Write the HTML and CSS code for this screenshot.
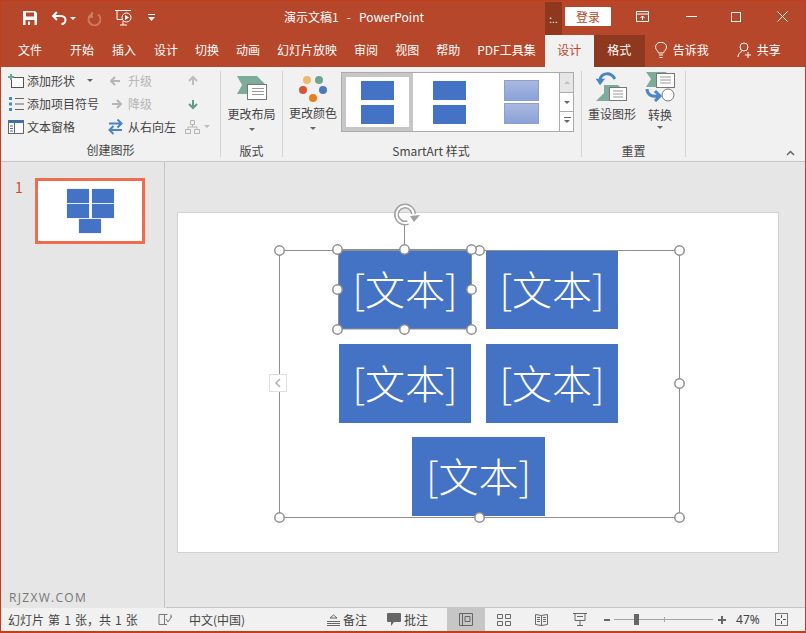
FILE: index.html
```html
<!DOCTYPE html>
<html lang="zh-CN">
<head>
  <meta charset="UTF-8" />
  <title>演示文稿1 - PowerPoint</title>
  <link rel="stylesheet" href="styles.css">
</head>
<body>
<div class="window">

  <!-- title bar -->
  <div class="titlebar">
    <svg class="qat-save" width="16" height="16" viewBox="0 0 16 16"><path d="M1 1h12l2 2v12H1z" fill="#fff"/><rect x="4" y="2.500" width="8" height="4" fill="#b7472a"/><rect x="3.500" y="10" width="9" height="5" fill="#b7472a"/><rect x="6" y="11.500" width="2" height="3.500" fill="#fff"/></svg>
    <svg class="qat-undo" width="16" height="15" viewBox="0 0 16 15"><path d="M6 1L2 5l4 4M2 5h8c3 0 4.500 2 4.500 4s-1.500 4-4 4" fill="none" stroke="#fff" stroke-width="2"/></svg>
    <span class="caret caret-undo"></span>
    <svg class="qat-redo" width="14" height="15" viewBox="0 0 14 15"><path d="M10 2.500a6 6 0 1 1-6-.5M4 0v5h-4" transform="translate(1 1)" fill="none" stroke="#cc7a5f" stroke-width="2"/></svg>
    <svg class="qat-show" width="17" height="16" viewBox="0 0 17 16"><path d="M0 .5h16M2 .5v9h6M5 15h7M8 11v4" fill="none" stroke="#fff"/><circle cx="11.500" cy="7.500" r="4.500" fill="#b7472a" stroke="#fff"/><path d="M10 5l4 2.500-4 2.500z" fill="#fff"/></svg>
    <svg class="qat-more" width="9" height="8" viewBox="0 0 9 8"><path d="M1 .5h7" stroke="#fff"/><path d="M1 3h7L4.500 7z" fill="#fff"/></svg>
    <div class="doc-title">演示文稿1&nbsp;&nbsp; -&nbsp;&nbsp; PowerPoint</div>
    <div class="ctx-flag">:..</div>
    <button class="signin">登录</button>
    <svg class="win-ribbon" width="14" height="11" viewBox="0 0 14 11"><path d="M.5.500h12v10H.500zM.5 3h12M6.500 9V5M4.500 7l2-2 2 2" fill="none" stroke="#fff"/></svg>
    <svg class="win-min" width="11" height="1" viewBox="0 0 11 1"><rect width="11" height="1" fill="#fff"/></svg>
    <svg class="win-max" width="10" height="10" viewBox="0 0 10 10"><rect x=".5" y=".5" width="9" height="9" fill="none" stroke="#fff"/></svg>
    <svg class="win-close" width="11" height="11" viewBox="0 0 11 11"><path d="M.5.500l10 10M10.500.500l-10 10" stroke="#fff"/></svg>
  </div>

  <!-- tabs -->
  <div class="tabs">
    <span class="tab tab-file">文件</span>
    <span class="tab tab-home">开始</span>
    <span class="tab tab-wide">插入</span>
    <span class="tab">设计</span>
    <span class="tab">切换</span>
    <span class="tab">动画</span>
    <span class="tab">幻灯片放映</span>
    <span class="tab">审阅</span>
    <span class="tab">视图</span>
    <span class="tab">帮助</span>
    <span class="tab">PDF工具集</span>
    <span class="tab tab-active">设计</span>
    <span class="tab tab-ctx">格式</span>
    <svg class="tell-icon" width="12" height="17" viewBox="0 0 12 17"><path d="M3.500 11C3 8.500.5 8 .5 5a5.500 4.800 0 0 1 11 0c0 3-2.500 3.500-3 6zM4 13h4M4.500 15.500h3" fill="none" stroke="#fff"/></svg>
    <span class="tab tab-tell">告诉我</span>
    <svg class="share-icon" width="16" height="16" viewBox="0 0 16 16"><circle cx="7" cy="5" r="4" fill="none" stroke="#fff"/><path d="M1 15c0-3 2-5 4-5.500M11 10v6M8 13h6" fill="none" stroke="#fff"/></svg>
    <span class="tab tab-share">共享</span>
  </div>

  <!-- ribbon -->
  <div class="ribbon">
    <div class="group group-create">
      <div class="group-body create-grid">
        <div class="cmd">
          <svg width="16" height="14" viewBox="0 0 16 14"><rect x="3.500" y="3.500" width="12" height="10" fill="#fff" stroke="#555"/><path d="M0 3h6M3 0v6" stroke="#6fa58f" stroke-width="2"/></svg>
          <span>添加形状</span><span class="caret caret-dark caret-shape"></span>
        </div>
        <div class="cmd cmd-off">
          <svg width="12" height="10" viewBox="0 0 12 10"><path d="M5 1L1 5l4 4M1 5h9" fill="none" stroke="#b5b5b5" stroke-width="2"/></svg>
          <span>升级</span>
        </div>
        <div class="cmd">
          <svg width="12" height="12" viewBox="0 0 12 12"><path d="M6 10V2M2 6l4-4 4 4" fill="none" stroke="#bdbdbd" stroke-width="2"/></svg>
        </div>
        <div class="cmd">
          <svg width="16" height="14" viewBox="0 0 16 14"><path d="M1 0h3v3H1zM1 5.500h3v3H1zM1 11h3v3H1z" fill="#4a86c5"/><path d="M7 1.500h9M7 7h9M7 12.500h9" stroke="#666"/></svg>
          <span>添加项目符号</span>
        </div>
        <div class="cmd cmd-off">
          <svg width="12" height="10" viewBox="0 0 12 10"><path d="M7 1l4 4-4 4M11 5H2" fill="none" stroke="#b5b5b5" stroke-width="2"/></svg>
          <span>降级</span>
        </div>
        <div class="cmd">
          <svg width="12" height="12" viewBox="0 0 12 12"><path d="M6 2v8M2 6l4 4 4-4" fill="none" stroke="#5d9e84" stroke-width="2"/></svg>
        </div>
        <div class="cmd">
          <svg width="16" height="14" viewBox="0 0 16 14"><rect x=".5" y=".5" width="15" height="13" fill="#fff" stroke="#666"/><rect width="16" height="3" fill="#41719c"/><path d="M6.500 3v10" stroke="#666"/><path d="M2 6h3M2 8.500h3M2 11h3" stroke="#41719c"/></svg>
          <span>文本窗格</span>
        </div>
        <div class="cmd cmd-rtl">
          <svg width="16" height="16" viewBox="0 0 16 16"><path d="M1 5.500h12M9.500 1.500l4 4-4 4" transform="translate(1 -1)" fill="none" stroke="#4a86c5" stroke-width="2"/><path d="M15 11H3M6.500 7l-4 4 4 4" fill="none" stroke="#4a86c5" stroke-width="2"/></svg>
          <span>从右向左</span>
        </div>
        <div class="cmd cmd-org">
          <svg width="15" height="14" viewBox="0 0 15 14"><path d="M5.500.500h4v4h-4zM.5 9.500h5v4h-5zM9.500 9.500h5v4h-5zM7.500 4.500V7M3 9.500V7h9v2.500" fill="none" stroke="#b5b5b5"/></svg>
          <span class="caret caret-off"></span>
        </div>
      </div>
      <div class="group-label">创建图形</div>
    </div>

    <div class="group group-layout">
      <div class="group-body big">
        <svg class="big-icon" width="30" height="25" viewBox="0 0 30 25"><path d="M0 0h20l9 9-6 9H0l5-9z" fill="#7eac9b"/><rect x="10.500" y="8.500" width="19" height="15" fill="#fff" stroke="#777"/><path d="M15 12.500h12M15 15.500h12M15 18.500h12" stroke="#999"/></svg>
        <span>更改布局</span>
        <span class="caret caret-dark"></span>
      </div>
      <div class="group-label">版式</div>
    </div>

    <div class="group group-color">
      <div class="group-body big">
        <svg class="big-icon" width="28" height="28" viewBox="0 0 28 28"><circle cx="8" cy="5" r="4" fill="#eeb96b"/><circle cx="20" cy="5" r="4" fill="#6fa58f"/><circle cx="4" cy="15" r="4" fill="#d65532"/><circle cx="24" cy="15" r="4" fill="#4a79b8"/><circle cx="14" cy="23" r="4" fill="#e87e22"/></svg>
        <span>更改颜色</span>
        <span class="caret caret-dark"></span>
      </div>
    </div>

    <div class="group group-style">
      <div class="group-body">
        <div class="gallery">
          <div class="gal-items">
            <div class="gal-item gal-selected"><i></i><i></i></div>
            <div class="gal-item"><i></i><i></i></div>
            <div class="gal-item gal-soft"><i></i><i></i></div>
          </div>
          <div class="gal-scroll">
            <div class="gal-btn gal-btn-off"><span class="up"></span></div>
            <div class="gal-btn"><span class="down"></span></div>
            <div class="gal-btn gal-btn-more"><span class="down"></span></div>
          </div>
        </div>
      </div>
      <div class="group-label group-label-style">SmartArt 样式</div>
    </div>

    <div class="group group-reset">
      <div class="group-body reset-row">
        <div class="big big-reset">
          <svg class="big-icon" width="34" height="29" viewBox="0 0 34 29"><path d="M9 13h14l8 8-5 8H1l8-8z" fill="#7eac9b"/><path d="M5 8C6 1 15-1 20 7" fill="none" stroke="#4a86c5" stroke-width="3"/><path d="M.7 6.700H10L5 13.300z" fill="#4a86c5"/><rect x="14.500" y="15.500" width="17" height="13" fill="#fff" stroke="#777"/><path d="M18 19h10M18 22h10M18 25h10" stroke="#999"/></svg>
          <span>重设图形</span>
        </div>
        <div class="big big-convert">
          <svg class="big-icon" width="31" height="30" viewBox="0 0 31 30"><path d="M1 0h20l6 7-5 8H1l5-8z" fill="#7eac9b"/><rect x="11.500" y="1.500" width="18" height="14" fill="#fff" stroke="#777"/><path d="M15 5h11M15 8h11M15 11h11" stroke="#999"/><path d="M2 17c0 6 5 8 11 7M10 19l5 5-5 5" fill="none" stroke="#4a86c5" stroke-width="3"/><circle cx="23" cy="23" r="6" fill="#fff" stroke="#777"/></svg>
          <span>转换</span>
          <span class="caret caret-dark"></span>
        </div>
      </div>
      <div class="group-label">重置</div>
    </div>

    <svg class="collapse" width="9" height="6" viewBox="0 0 9 6"><path d="M1 5l3.500-3.500L8 5" fill="none" stroke="#666" stroke-width="1.500"/></svg>
  </div>

  <!-- workspace -->
  <div class="workspace">
    <div class="thumbs">
      <div class="thumb-row">
        <span class="thumb-num">1</span>
        <div class="thumb">
          <div class="mini-row"><i></i><i></i></div>
          <div class="mini-row"><i></i><i></i></div>
          <div class="mini-row"><i></i></div>
        </div>
      </div>
      <div class="watermark">RJZXW.COM</div>
    </div>

    <div class="stage">
      <div class="slide">
        <div class="diagram">
          <div class="shape-row"><div class="shape">[文本]</div><div class="shape">[文本]</div></div>
          <div class="shape-row"><div class="shape">[文本]</div><div class="shape">[文本]</div></div>
          <div class="shape-row shape-row-last"><div class="shape">[文本]</div></div>
        </div>
        <!-- selection frame and handles, drawn in slide coordinates -->
        <svg class="selection" width="600" height="339" viewBox="0 0 600 339">
          <g fill="none" stroke="#8f8f8f">
            <rect x="101.500" y="37.500" width="400" height="267"/>
            <rect x="160.500" y="36.500" width="133" height="79.500"/>
            <path d="M226.500 12v24"/>
          </g>
          <g fill="none">
            <path d="M235.500 1A8.500 8.500 0 1 0 230 9.500" stroke="#a0a0a0" stroke-width="5"/>
            <path d="M235.500 1A8.500 8.500 0 1 0 230 9.500" stroke="#fff" stroke-width="2"/>
          </g>
          <path d="M232 3l10-1-6 7z" fill="#a0a0a0"/>
          <g fill="#fff" stroke="#8f8f8f" stroke-width="1.500">
            <circle cx="101.500" cy="37.500" r="4.700"/>
            <circle cx="301.500" cy="37.500" r="4.700"/>
            <circle cx="501.500" cy="37.500" r="4.700"/>
            <circle cx="501.500" cy="170.500" r="4.700"/>
            <circle cx="101.500" cy="304.500" r="4.700"/>
            <circle cx="301.500" cy="304.500" r="4.700"/>
            <circle cx="501.500" cy="304.500" r="4.700"/>
            <circle cx="159.500" cy="36.500" r="4.700"/>
            <circle cx="226.500" cy="36.500" r="4.700"/>
            <circle cx="293.500" cy="36.500" r="4.700"/>
            <circle cx="159.500" cy="76.500" r="4.700"/>
            <circle cx="293.500" cy="76.500" r="4.700"/>
            <circle cx="159.500" cy="116.500" r="4.700"/>
            <circle cx="226.500" cy="116.500" r="4.700"/>
            <circle cx="293.500" cy="116.500" r="4.700"/>
          </g>
        </svg>
        <div class="pane-toggle">
          <svg width="6" height="10" viewBox="0 0 6 10"><path d="M5 1L1 5l4 4" fill="none" stroke="#b0b0b0" stroke-width="1.500"/></svg>
        </div>
      </div>
    </div>
  </div>

  <!-- status bar -->
  <div class="statusbar">
    <span class="st-count">幻灯片 第 1 张，共 1 张</span>
    <svg class="st-book" width="14" height="13" viewBox="0 0 14 13"><path d="M6.500 1.500H1v10h5.500zM6.500 11.500V1.500h3M6.500 11.500H9M13 1.500v3M8 6l2 3 4-6" fill="none" stroke="#777"/></svg>
    <span class="st-lang">中文(中国)</span>
    <svg class="st-notes" width="13" height="12" viewBox="0 0 13 12"><path d="M3 4l3.500-3L10 4zM0 7.500h13M0 9.500h13M0 11.500h13" fill="none" stroke="#666"/></svg>
    <span class="st-label">备注</span>
    <svg class="st-comment" width="14" height="13" viewBox="0 0 14 13"><path d="M1 0h12a1 1 0 0 1 1 1v7a1 1 0 0 1-1 1H7l-3 4V9H1a1 1 0 0 1-1-1V1a1 1 0 0 1 1-1z" fill="#666"/></svg>
    <span class="st-label">批注</span>
    <div class="view view-on">
      <svg width="14" height="13" viewBox="0 0 14 13"><path d="M.5.500h13v12H.500zM3.500.500v12M6 3.500h5v5H6z" fill="none" stroke="#666"/></svg>
    </div>
    <div class="view">
      <svg width="14" height="12" viewBox="0 0 14 12"><path d="M.5.500h5v4h-5zM8.500.500h5v4h-5zM.5 7.500h5v4h-5zM8.500 7.500h5v4h-5z" fill="none" stroke="#666"/></svg>
    </div>
    <div class="view view-read">
      <svg width="13" height="13" viewBox="0 0 13 13"><path d="M.5 1.500l6 1 6-1v10l-6 1-6-1zM6.500 2.500v10M2 4.500h3M2 6.500h3M2 8.500h3M8 4.500h3M8 6.500h3M8 8.500h3" fill="none" stroke="#666"/></svg>
    </div>
    <div class="view view-show">
      <svg width="14" height="13" viewBox="0 0 14 13"><path d="M0 .5h14M2 .5v7h10v-7M7 8v4M4 12.500h6M4 3.500h6" fill="none" stroke="#666"/></svg>
    </div>
    <span class="zoom-minus"></span>
    <div class="zoom-track"><span class="zoom-tick"></span><span class="zoom-knob"></span></div>
    <span class="zoom-plus"></span>
    <span class="st-zoom">47%</span>
    <svg class="st-fit" width="13" height="13" viewBox="0 0 13 13"><rect x=".5" y=".5" width="12" height="12" fill="none" stroke="#777"/><path d="M6.500 2v3M6.500 8v3M2 6.500h3M8 6.500h3" stroke="#555"/></svg>
  </div>
</div>
</body>
</html>
```

FILE: styles.css
```css
* {
  box-sizing: border-box;
}
body {
  margin: 0;
  background: #fff;
  font-family: "Noto Sans CJK SC", "Liberation Sans", sans-serif;
  font-size: 12px;
  color: #444;
}
.window {
  width: 806px;
  height: 633px;
  display: flex;
  flex-direction: column;
  overflow: hidden;
  border: 1px solid #c43e1c;
  border-bottom-width: 2px;
  background: #e6e6e6;
}

/* title bar */
.titlebar {
  height: 34px;
  flex: none;
  display: flex;
  align-items: center;
  background: #b7472a;
  color: #fff;
}
.qat-save { margin-left: 21px; }
.qat-undo { margin-left: 13px; }
.caret-undo { margin-left: 3px; }
.qat-redo { margin-left: 11px; }
.qat-show { margin-left: 14px; }
.qat-more { margin-left: 15px; }
.doc-title {
  margin: -3px 0 0 128px;
  width: 261px;
  line-height: 34px;
  white-space: nowrap;
}
.ctx-flag {
  width: 17px;
  height: 33px;
  margin-top: 1px;
  background: #8e3820;
  font-size: 10px;
  line-height: 34px;
  text-align: center;
}
.signin {
  width: 46px;
  height: 19px;
  margin: -3px 0 0 3px;
  padding: 0;
  border: none;
  border-radius: 1px;
  background: #fff;
  color: #b7472a;
  font: inherit;
  line-height: 19px;
}
.win-ribbon { margin: -3px 0 0 25px; }
.win-min { margin: -3px 0 0 36px; }
.win-max { margin: -3px 0 0 34px; }
.win-close { margin: -3px 0 0 36px; }

/* tabs */
.tabs {
  height: 32px;
  flex: none;
  display: flex;
  align-items: stretch;
  gap: 17px;
  background: #b7472a;
  color: #fff;
}
.tab {
  line-height: 30px;
}
.tab-file { margin-left: 17px; margin-right: 11px; }
.tab-home, .tab-wide { margin-right: 1px; }
.tab-active {
  width: 49px;
  margin-left: -8px;
  margin-right: -17px;
  background: #f1f1f1;
  color: #b7472a;
  text-align: center;
}
.tab-ctx {
  width: 51px;
  background: #8e3820;
  text-align: center;
  margin-right: -7px;
}
.tell-icon { align-self: center; margin-top: -2px; }
.tab-tell { margin-left: -11px; margin-right: 11px; }
.share-icon { align-self: center; margin-top: -2px; }
.tab-share { margin-left: -13px; }

/* ribbon */
.ribbon {
  position: relative;
  height: 95px;
  flex: none;
  display: flex;
  background: #f1f1f1;
  border-bottom: 1px solid #c6c6c6;
}
.group {
  display: flex;
  flex-direction: column;
  margin: 4px 0;
  border-right: 1px solid #d2d2d2;
}
.group-body {
  height: 73px;
}
.group-label {
  height: 13px;
  line-height: 14px;
  text-align: center;
}
.group-label-style { padding-right: 60px; }
.group-create { width: 220px; }
.group-layout { width: 62px; }
.group-color { width: 58px; padding-left: 2px; border-right: none; }
.group-style { width: 241px; }
.group-reset { width: 104px; }

.create-grid {
  display: grid;
  grid-template-columns: 101px 78px 30px;
  grid-auto-rows: 23px;
  padding-left: 7px;
  margin-top: -2px;
  margin-bottom: 1px;
  align-content: start;
}
.cmd {
  display: flex;
  align-items: center;
  gap: 3px;
  white-space: nowrap;
}
.cmd-off { gap: 6px; color: #b5b5b5; padding-left: 1px; }
.cmd-rtl { gap: 5px; margin-left: -2px; }
.cmd-org { gap: 4px; margin-left: -2px; }
.caret-shape { margin-left: 9px; }

.caret {
  display: inline-block;
  width: 0;
  height: 0;
  border-left: 3px solid transparent;
  border-right: 3px solid transparent;
  border-top: 3px solid #fff;
}
.caret-dark { border-top-color: #666; }
.caret-off { border-top-color: #bdbdbd; }

.big {
  display: flex;
  flex-direction: column;
  align-items: center;
  white-space: nowrap;
  line-height: 16px;
}
.big .caret { margin-top: 6px; }
.group-layout .big-icon { margin: 5px 0 5px; flex: none; }
.group-color .big-icon { margin: 4px 0 2px; flex: none; }

/* gallery */
.gallery {
  display: flex;
  width: 233px;
  height: 60px;
  margin-top: 1px;
  background: #fff;
  border: 1px solid #ababab;
}
.gal-items {
  flex: 1;
  display: flex;
  gap: 1px;
}
.gal-item {
  width: 71px;
  display: flex;
  flex-direction: column;
  align-items: center;
  justify-content: center;
  gap: 5px;
}
.gal-item i {
  width: 33px;
  height: 19px;
  background: #4472c4;
}
.gal-selected {
  border: 4px solid #c6c6c6;
}
.gal-soft { gap: 2px; }
.gal-soft i {
  width: 35px;
  height: 21px;
  background: linear-gradient(#aab8df, #8aa2d8);
  border: 1px solid #8d9ec9;
}
.gal-scroll {
  width: 14px;
  display: flex;
  flex-direction: column;
  border-left: 1px solid #ababab;
}
.gal-btn {
  flex: 1;
  display: flex;
  align-items: center;
  justify-content: center;
  border-bottom: 1px solid #ababab;
}
.gal-btn:last-child { border-bottom: none; }
.gal-btn-off { background: #e6e6e6; }
.gal-btn .up {
  border-left: 3px solid transparent;
  border-right: 3px solid transparent;
  border-bottom: 3px solid #c0c0c0;
}
.gal-btn .down {
  border-left: 3px solid transparent;
  border-right: 3px solid transparent;
  border-top: 3px solid #666;
}
.gal-btn-more .down {
  position: relative;
}
.gal-btn-more .down::before {
  content: "";
  position: absolute;
  left: -3px;
  top: -6px;
  width: 7px;
  height: 1px;
  background: #666;
}

.reset-row {
  display: flex;
  padding-left: 6px;
  gap: 12px;
}
.big-reset .big-icon { margin: 1px 0 5px; flex: none; }
.big-convert .big-icon { margin: 1px 0 5px; flex: none; }
.big-convert { width: 24px; }
.big-convert .caret { margin-top: 3px; }
.collapse {
  position: absolute;
  right: 10px;
  bottom: 5px;
}

/* workspace */
.workspace {
  flex: 1;
  min-height: 0;
  display: flex;
  background: #e6e6e6;
}
.thumbs {
  width: 164px;
  flex: none;
  display: flex;
  flex-direction: column;
  justify-content: space-between;
  border-right: 1px solid #c6c6c6;
}
.thumb-row {
  display: flex;
  padding: 16px 0 0 14px;
}
.thumb-num {
  width: 20px;
  color: #d24726;
  font-size: 14px;
  line-height: 18px;
}
.thumb {
  width: 110px;
  height: 66px;
  padding-top: 8px;
  border: 3px solid #ef6c4f;
  background: #fff;
  display: flex;
  flex-direction: column;
  align-items: center;
  gap: 1px;
}
.mini-row {
  display: flex;
  gap: 3px;
}
.mini-row i {
  width: 22px;
  height: 14px;
  background: #4472c4;
  box-shadow: 0 0 1px #a9bde3;
}
.watermark {
  padding: 0 0 1px 8px;
  color: #777;
  font-family: "Open Sans", "Liberation Sans", sans-serif;
  font-size: 12px;
  letter-spacing: 1.3px;
  line-height: 18px;
}
.stage {
  flex: 1;
  padding: 50px 0 0 11px;
  border-bottom: 1px solid #c6c6c6;
  margin-left: 1px;
}
.slide {
  position: relative;
  width: 602px;
  height: 341px;
  background: #fff;
  border: 1px solid #d2d2d2;
}
.diagram {
  position: absolute;
  left: 161px;
  top: 37px;
  width: 279px;
  display: flex;
  flex-direction: column;
  gap: 15px;
}
.shape-row {
  display: flex;
  justify-content: center;
  gap: 15px;
}
.shape-row-last { margin-top: -1px; }
.shape-row-last .shape { width: 133px; }
.shape {
  width: 132px;
  height: 79px;
  padding-bottom: 4px;
  display: flex;
  align-items: center;
  justify-content: center;
  background: #4472c4;
  color: #fff;
  font-size: 40px;
  font-weight: 300;
  line-height: 1;
}
.selection {
  position: absolute;
  left: 0;
  top: 0;
  overflow: visible;
}
.pane-toggle {
  position: absolute;
  left: 91px;
  top: 161px;
  width: 18px;
  height: 18px;
  display: flex;
  align-items: center;
  justify-content: center;
  background: #fff;
  border: 1px solid #e0e0e0;
}

/* status bar */
.statusbar {
  height: 23px;
  flex: none;
  display: flex;
  align-items: center;
  background: #f1f1f1;
  font-size: 12px;
  color: #444;
}
.st-count { margin-left: 7px; width: 131px; white-space: nowrap; word-spacing: 1.4px; }
.st-book { margin-left: 19px; }
.st-lang { margin-left: 17px; width: 57px; white-space: nowrap; }
.st-notes { margin-left: 81px; }
.st-label { margin-left: 3px; }
.st-comment { margin-left: 20px; }
.view {
  width: 38px;
  height: 100%;
  display: flex;
  align-items: center;
  justify-content: center;
}
.view-on { margin-left: 19px; background: #c6c6c6; }
.view-read { width: 36px; }
.view-show { width: 42px; }
.zoom-minus {
  width: 6px;
  height: 2px;
  margin-left: 3px;
  background: #666;
}
.zoom-track {
  position: relative;
  width: 99px;
  height: 1px;
  margin-left: 4px;
  background: #a6a6a6;
}
.zoom-knob {
  position: absolute;
  left: 20px;
  top: -5px;
  width: 5px;
  height: 11px;
  background: #666;
}
.zoom-tick {
  position: absolute;
  left: 50px;
  top: -2px;
  width: 1px;
  height: 5px;
  background: #a6a6a6;
}
.zoom-plus {
  position: relative;
  width: 8px;
  height: 2px;
  margin-left: 5px;
  background: #666;
}
.zoom-plus::after {
  content: "";
  position: absolute;
  left: 3px;
  top: -3px;
  width: 2px;
  height: 8px;
  background: #666;
}
.st-zoom { margin-left: 10px; width: 30px; font-family: "Noto Sans", sans-serif; }
.st-fit { margin-left: 9px; }
```
